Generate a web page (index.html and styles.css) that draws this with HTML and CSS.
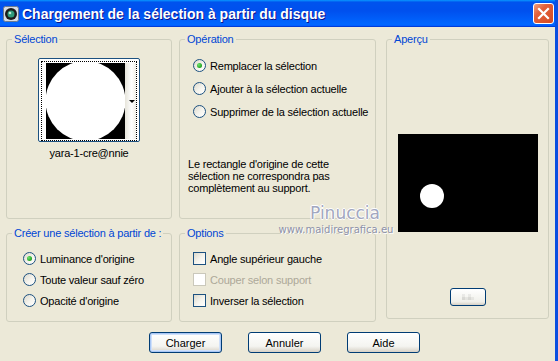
FILE: index.html
```html
<!DOCTYPE html>
<html lang="fr">
<head>
  <meta charset="UTF-8" />
  <title>Chargement de la sélection à partir du disque</title>
  <link rel="stylesheet" href="styles.css">
</head>
<body>
  <div class="window">
    <div class="titlebar">
      <svg class="app-icon" width="16" height="16" viewBox="0 0 16 16">
        <rect x="0.5" y="0.5" width="15" height="15" rx="2" fill="#d8dce4" stroke="#6b7a90"/>
        <circle cx="8" cy="8" r="6" fill="#1b1b1b"/>
        <circle cx="8" cy="8" r="3.5" fill="#2f9a7a"/>
        <circle cx="7" cy="7" r="1.3" fill="#bfe8d6"/>
      </svg>
      <span class="title">Chargement de la sélection à partir du disque</span>
      <button class="close-btn" aria-label="Fermer">
        <svg width="13" height="13" viewBox="0 0 13 13">
          <path d="M2 2 L11 11 M11 2 L2 11" stroke="#fff" stroke-width="2.2" stroke-linecap="square"/>
        </svg>
      </button>
    </div>

    <div class="dialog">
      <fieldset class="group group-selection">
        <legend>Sélection</legend>
        <div class="thumb">
          <div class="thumb-focus">
            <svg class="thumb-image" width="79" height="76" viewBox="0 0 79 76">
              <rect width="79" height="76" fill="#000"/>
              <circle cx="39.5" cy="38" r="40" fill="#fff"/>
            </svg>
            <div class="thumb-drop"><span class="arrow"></span></div>
          </div>
        </div>
        <div class="thumb-name">yara-1-cre@nnie</div>
      </fieldset>

      <fieldset class="group group-operation">
        <legend>Opération</legend>
        <div class="choices">
          <label class="choice"><span class="radio checked"></span>Remplacer la sélection</label>
          <label class="choice"><span class="radio"></span>Ajouter à la sélection actuelle</label>
          <label class="choice"><span class="radio"></span>Supprimer de la sélection actuelle</label>
        </div>
        <p class="note">Le rectangle d'origine de cette sélection ne correspondra pas complètement au support.</p>
      </fieldset>

      <fieldset class="group group-preview">
        <legend>Aperçu</legend>
        <svg class="preview" width="140" height="98" viewBox="0 0 140 98">
          <rect width="140" height="98" fill="#000"/>
          <circle cx="34" cy="62" r="12" fill="#fff"/>
        </svg>
        <button class="mini-btn"><span class="mini-icon"></span></button>
      </fieldset>

      <fieldset class="group group-source">
        <legend>Créer une sélection à partir de :</legend>
        <div class="choices tight">
          <label class="choice"><span class="radio checked"></span>Luminance d'origine</label>
          <label class="choice"><span class="radio"></span>Toute valeur sauf zéro</label>
          <label class="choice"><span class="radio"></span>Opacité d'origine</label>
        </div>
      </fieldset>

      <fieldset class="group group-options">
        <legend>Options</legend>
        <div class="choices tight">
          <label class="choice"><span class="check"></span>Angle supérieur gauche</label>
          <label class="choice disabled"><span class="check"></span>Couper selon support</label>
          <label class="choice"><span class="check"></span>Inverser la sélection</label>
        </div>
      </fieldset>
    </div>

    <div class="actions">
      <button class="btn default">Charger</button>
      <button class="btn">Annuler</button>
      <button class="btn">Aide</button>
    </div>

    <div class="watermark">
      <div class="wm-name">Pinuccia</div>
      <div class="wm-url">www.maidiregrafica.eu</div>
    </div>
  </div>
</body>
</html>
```

FILE: styles.css
```css
body {
  margin: 0;
  font-family: 'Liberation Sans', Arial, sans-serif;
  font-size: 11px;
  letter-spacing: -0.2px;
  color: #000;
  background-color: #ece9d8;
}
.window {
  position: relative;
  width: 555px;
  height: 361px;
  background-color: #ece9d8;
  border-right: 3px solid #0b4fe0;
  overflow: hidden;
}
.titlebar {
  height: 27px;
  display: flex;
  align-items: center;
  padding: 0 1px 0 3px;
  background: linear-gradient(#0997ff 0, #0053ee 8%, #0050ee 40%, #0066ff 88%, #0066ff 93%, #005bff 95%, #003dd7 96%, #003dd7 100%);
}
.app-icon {
  flex: none;
  margin-right: 3px;
}
.title {
  flex: 1;
  color: #fff;
  font-weight: bold;
  font-size: 14px;
  letter-spacing: 0;
  text-shadow: 1px 1px #0f1089;
}
.close-btn {
  width: 21px;
  height: 21px;
  padding: 0;
  display: flex;
  align-items: center;
  justify-content: center;
  border: 1px solid #fff;
  border-radius: 3px;
  background: linear-gradient(135deg, #f0a080 0%, #e2603a 35%, #d64a22 100%);
}

.dialog {
  display: grid;
  grid-template-columns: 166px 197px 166px;
  grid-template-rows: 186px 95px;
  column-gap: 7px;
  row-gap: 8px;
  padding: 6px 0 0 6px;
}
.dialog .group-preview {
  grid-column: 3;
  grid-row: 1 / span 2;
  margin-left: 3px;
  margin-bottom: 3px;
}
.group {
  margin: 0;
  padding: 0;
  min-width: 0;
  border: 1px solid #d0d0bf;
  border-radius: 3px;
}
.group legend {
  margin-left: 5px;
  padding: 0 2px;
  color: #0046d5;
  line-height: 13px;
}

/* Selection thumbnail */
.group-selection {
  display: flex;
  flex-direction: column;
  align-items: center;
}
.thumb {
  margin-top: 12px;
  width: 100px;
  height: 82px;
  border: 1px solid #1c5180;
  border-radius: 2px;
  background-color: #fff;
}
.thumb-focus {
  margin: 2px;
  height: 76px;
  display: flex;
  border: 1px dotted #000;
  padding: 1px 0 1px 4px;
}
.thumb-image {
  display: block;
}
.thumb-drop {
  flex: 1;
  display: flex;
  align-items: center;
  justify-content: flex-end;
  padding-right: 1px;
  background: linear-gradient(90deg, #e6e4da, #fff 60%, #f0efe8);
}
.arrow {
  width: 0;
  height: 0;
  border-left: 3px solid transparent;
  border-right: 3px solid transparent;
  border-top: 3px solid #000;
}
.thumb-name {
  margin-top: 5px;
}

/* Radio / checkbox rows */
.choices {
  display: flex;
  flex-direction: column;
  gap: 10px;
  margin: 13px 0 0 13px;
}
.choices.tight {
  gap: 8px;
  margin-top: 12px;
}
.group-source .choices {
  margin-left: 16px;
}
.choice {
  display: flex;
  align-items: center;
  gap: 4px;
  height: 13px;
  white-space: nowrap;
}
.choice.disabled {
  color: #aca899;
}
.radio {
  flex: none;
  width: 11px;
  height: 11px;
  border: 1px solid #1c5180;
  border-radius: 50%;
  background: linear-gradient(135deg, #dcd9cc 0%, #f5f4ee 55%, #fff 100%);
  display: flex;
  align-items: center;
  justify-content: center;
}
.radio.checked::after {
  content: '';
  width: 5px;
  height: 5px;
  border-radius: 50%;
  background: radial-gradient(circle at 35% 35%, #6de46d, #21a121 70%);
}
.check {
  flex: none;
  width: 11px;
  height: 11px;
  border: 1px solid #1c5180;
  background: linear-gradient(135deg, #dcd9cc 0%, #f5f4ee 55%, #fff 100%);
}
.choice.disabled .check {
  border-color: #cac8bb;
  background: #fff;
}
.note {
  margin: 40px 0 0 8px;
  line-height: 12px;
  width: 180px;
}

/* Preview */
.group-preview {
  display: flex;
  flex-direction: column;
  align-items: center;
}
.preview {
  display: block;
  margin-top: 88px;
}
.mini-btn {
  margin-top: 56px;
  width: 36px;
  height: 18px;
  padding: 0;
  display: flex;
  align-items: center;
  justify-content: center;
  border: 1px solid #003c74;
  border-radius: 3px;
  background: linear-gradient(#fff, #f0f0ea 80%, #d6d0c5);
}
.mini-icon {
  width: 12px;
  height: 6px;
  background:
    repeating-linear-gradient(90deg, rgba(0,0,0,0.06) 0 3px, transparent 3px 6px),
    repeating-linear-gradient(0deg, rgba(0,0,0,0.06) 0 3px, transparent 3px 6px);
}

/* Bottom buttons */
.actions {
  display: flex;
  gap: 26px;
  padding: 10px 0 0 149px;
}
.btn {
  width: 73px;
  height: 21px;
  padding: 0;
  font-family: 'Liberation Sans', Arial, sans-serif;
  font-size: 11px;
  color: #000;
  border: 1px solid #003c74;
  border-radius: 3px;
  background: linear-gradient(#fff, #f4f4f0 70%, #d6d0c5);
}
.btn.default {
  box-shadow: inset 0 0 0 1px #a9c7f5, inset 0 0 0 2px #cfe0fa;
}

/* Watermark over the dialog */
.watermark {
  position: absolute;
  left: 274px;
  top: 203px;
  width: 124px;
  text-align: center;
  pointer-events: none;
  letter-spacing: 0;
}
.wm-name {
  font-family: 'DejaVu Sans', sans-serif;
  font-size: 17px;
  color: #a2a7c0;
  padding-left: 18px;
  line-height: 21px;
  text-shadow: 1px 0 #fff, -1px 0 #fff, 0 1px #fff, 0 -1px #fff;
}
.wm-url {
  font-family: 'DejaVu Sans', sans-serif;
  font-size: 10px;
  color: #8d91a8;
  line-height: 12px;
  text-shadow: 1px 1px #fff;
}
```
